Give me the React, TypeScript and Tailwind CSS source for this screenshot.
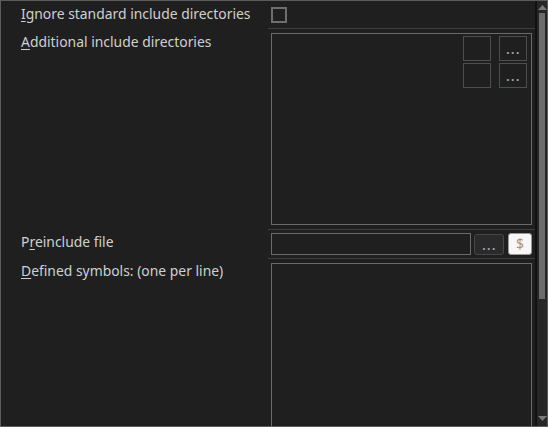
const FONT = { fontFamily: '"Noto Sans", "Liberation Sans", sans-serif' };

function Label({ text, idx }: { text: string; idx: number }) {
  return (
    <span>
      {text.slice(0, idx)}
      <span className="underline underline-offset-2">{text[idx]}</span>
      {text.slice(idx + 1)}
    </span>
  );
}

function DotsButton({ className }: { className: string }) {
  return (
    <div className={className}>
      <span className="text-[12px] leading-none tracking-[1.5px] pl-[1px] font-bold text-[#9ea8b6] mt-[3px]">...</span>
    </div>
  );
}

export default function App() {
  return (
    <div
      className="w-[548px] h-[427px] border border-[#5c5c5c] bg-[#1f1f1f] flex overflow-hidden text-[13.9px] leading-[18px] text-[#d0d0d0]"
      style={FONT}
    >
      {/* property rows */}
      <div className="flex-1 flex flex-col min-w-0 overflow-hidden">
        {/* Ignore standard include directories */}
        <div className="flex h-[28px] shrink-0">
          <div className="w-[267px] pl-[20px] pt-[4px]">
            <Label text="Ignore standard include directories" idx={0} />
          </div>
          <div className="flex-1 flex flex-col">
            <div className="flex-1 pl-[3px] pt-[6px]">
              <div className="w-[16px] h-[16px] border-[2px] border-[#6e6e6e]" />
            </div>
            <div className="h-px bg-[#3e3e3e]" />
          </div>
        </div>

        {/* Additional include directories */}
        <div className="flex h-[201px] shrink-0">
          <div className="w-[267px] pl-[20px] pt-[4px]">
            <Label text="Additional include directories" idx={0} />
          </div>
          <div className="flex-1 flex flex-col">
            <div className="flex-1 pl-[3px] pr-[3px] pt-[4px] pb-[4px]">
              <div className="h-full border border-[#6a6a6a] flex justify-end pt-[2px] pr-[4px]">
                <div className="grid grid-cols-[28px_28px] gap-x-[8px] gap-y-[2px] h-fit">
                  <div className="h-[25px] border border-[#4e4e4e]" />
                  <DotsButton className="h-[25px] border border-[#4e4e4e] flex items-center justify-center" />
                  <div className="h-[25px] border border-[#4e4e4e]" />
                  <DotsButton className="h-[25px] border border-[#4e4e4e] flex items-center justify-center" />
                </div>
              </div>
            </div>
            <div className="h-px bg-[#3e3e3e]" />
          </div>
        </div>

        {/* Preinclude file */}
        <div className="flex h-[29px] shrink-0">
          <div className="w-[267px] pl-[20px] pt-[3px]">
            <Label text="Preinclude file" idx={1} />
          </div>
          <div className="flex-1 flex flex-col">
            <div className="flex-1 flex items-center pl-[3px] pr-[3px] gap-[3px]">
              <div className="w-[200px] h-[22px] border border-[#6a6a6a]" />
              <DotsButton className="w-[30px] h-[21px] rounded-[3px] border border-[#474747] bg-[#2a2a2a] flex items-center justify-center" />
              <div className="ml-[1px] w-[24px] h-[22px] rounded-[3px] border border-[#9a9a9a] bg-[#f7f7f7] flex items-center justify-center text-[14px] text-[#b48c6e]">
                $
              </div>
            </div>
            <div className="h-px bg-[#3e3e3e]" />
          </div>
        </div>

        {/* Defined symbols */}
        <div className="flex flex-1 min-h-0">
          <div className="w-[267px] pl-[20px] pt-[3px]">
            <Label text="Defined symbols: (one per line)" idx={0} />
          </div>
          <div className="flex-1 pl-[3px] pr-[3px] pt-[4px]">
            <div className="h-[200px] border border-[#6a6a6a]" />
          </div>
        </div>
      </div>

      {/* scrollbar */}
      <div className="w-[12px] shrink-0 border-l-[2px] border-[#111111] bg-[#262626] flex flex-col items-center">
        <svg width="9" height="5" viewBox="0 0 9 5" className="mt-[4px]">
          <path d="M0 5 L4.5 0 L9 5 Z" fill="#7a7a7a" />
        </svg>
        <div className="mt-[3px] w-[6px] h-[286px] bg-[#6c6c6c]" />
        <div className="flex-1" />
        <svg width="9" height="5" viewBox="0 0 9 5" className="mb-[5px]">
          <path d="M0 0 L9 0 L4.5 5 Z" fill="#7a7a7a" />
        </svg>
      </div>
    </div>
  );
}
